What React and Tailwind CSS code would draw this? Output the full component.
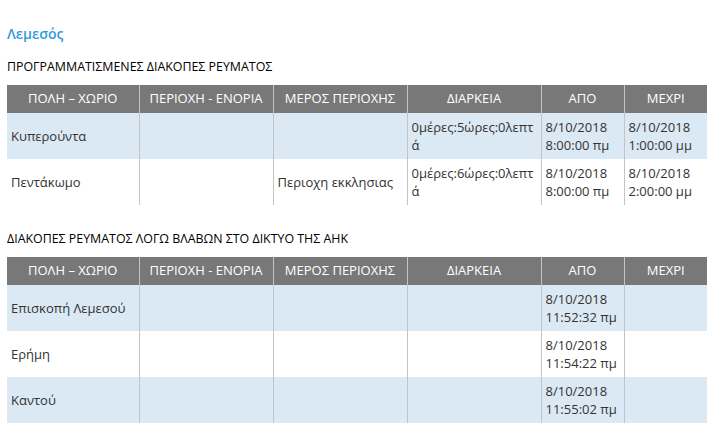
import React from 'react';

const cols = ['ΠΟΛΗ – ΧΩΡΙΟ', 'ΠΕΡΙΟΧΗ - ΕΝΟΡΙΑ', 'ΜΕΡΟΣ ΠΕΡΙΟΧΗΣ', 'ΔΙΑΡΚΕΙΑ', 'ΑΠΟ', 'ΜΕΧΡΙ'];
const widths = ['w-[132px]', 'w-[134px]', 'w-[134px]', 'w-[134px]', 'w-[83px]', 'w-[83px]'];

const planned = [
  ['Κυπερούντα', '', '', '0μέρες:5ώρες:0λεπτά', '8/10/2018 8:00:00 πμ', '8/10/2018 1:00:00 μμ'],
  ['Πεντάκωμο', '', 'Περιοχη εκκλησιας', '0μέρες:6ώρες:0λεπτά', '8/10/2018 8:00:00 πμ', '8/10/2018 2:00:00 μμ'],
];

const faults = [
  ['Επισκοπή Λεμεσού', '', '', '', '8/10/2018 11:52:32 πμ', ''],
  ['Ερήμη', '', '', '', '8/10/2018 11:54:22 πμ', ''],
  ['Καντού', '', '', '', '8/10/2018 11:55:02 πμ', ''],
];

function OutageTable({ rows }) {
  return (
    <table className="w-[700px] table-fixed border-collapse">
      <colgroup>
        {widths.map((w, i) => (
          <col key={i} className={w} />
        ))}
      </colgroup>
      <thead>
        <tr className="bg-[#787878] h-[28px]">
          {cols.map((c, i) => (
            <th
              key={c}
              className={`text-[13px] font-normal text-white text-center p-0 whitespace-nowrap ${i > 0 ? 'border-l border-[#c4c4c4]' : ''}`}
            >
              {c}
            </th>
          ))}
        </tr>
      </thead>
      <tbody>
        {rows.map((r, ri) => (
          <tr key={ri} className={`h-[46px] ${ri % 2 === 0 ? 'bg-[#dbe9f4]' : 'bg-white'}`}>
            {r.map((cell, ci) => (
              <td
                key={ci}
                className={`text-[13px] leading-[18px] text-[#333] px-[4px] py-[5px] align-middle break-all ${ci > 0 ? 'border-l border-[#c4c4c4]' : ''}`}
              >
                {ci >= 4 && cell ? (
                  <>
                    {cell.split(' ')[0]}
                    <br />
                    {cell.split(' ').slice(1).join(' ')}
                  </>
                ) : (
                  cell
                )}
              </td>
            ))}
          </tr>
        ))}
      </tbody>
    </table>
  );
}

export default function App() {
  return (
    <div className="w-[718px] h-[436px] bg-white px-[7px] pt-[24px] overflow-hidden" style={{ fontFamily: '"Open Sans", sans-serif' }}>
      <h1 className="text-[14px] leading-[20px] font-semibold text-[#3399dd]">Λεμεσός</h1>
      <h2 className="mt-[14px] mb-[9px] text-[12.4px] leading-[18px] text-black font-normal">ΠΡΟΓΡΑΜΜΑΤΙΣΜΕΝΕΣ ΔΙΑΚΟΠΕΣ ΡΕΥΜΑΤΟΣ</h2>
      <OutageTable rows={planned} />
      <h2 className="mt-[25px] mb-[9px] text-[12.4px] leading-[18px] text-black font-normal">ΔΙΑΚΟΠΕΣ ΡΕΥΜΑΤΟΣ ΛΟΓΩ ΒΛΑΒΩΝ ΣΤΟ ΔΙΚΤΥΟ ΤΗΣ ΑΗΚ</h2>
      <OutageTable rows={faults} />
    </div>
  );
}
